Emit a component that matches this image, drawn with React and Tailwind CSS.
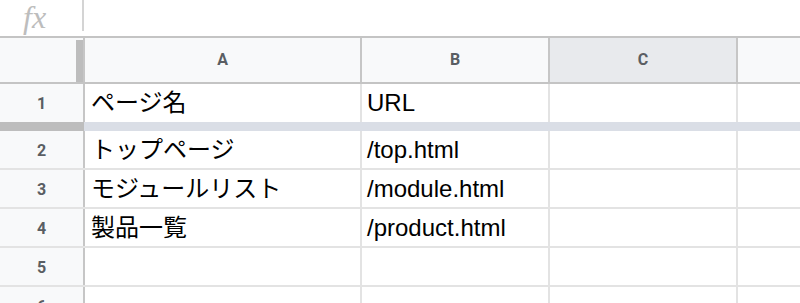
import React from "react";

const rows = [
  { n: "2", a: "トップページ", b: "/top.html" },
  { n: "3", a: "モジュールリスト", b: "/module.html" },
  { n: "4", a: "製品一覧", b: "/product.html" },
  { n: "5", a: "", b: "" },
  { n: "6", a: "", b: "" },
];

const cellText =
  "text-[24px] text-black leading-none [font-family:'Liberation_Sans','Noto_Sans_CJK_JP',sans-serif]";
const hdrText =
  "text-[16px] font-bold text-[#5a5e63] [font-family:Roboto,'Liberation_Sans',sans-serif]";

function BodyRow({ n, a, b, h = "h-[39px]" }) {
  return (
    <div className={`flex ${h} shrink-0 border-b-2 border-[#e3e3e3]`}>
      <div className={`w-[85px] shrink-0 bg-[#f8f9fa] border-r-2 border-[#c6c6c6] flex items-center justify-center pt-[2px] ${hdrText}`}>
        {n}
      </div>
      <div className={`w-[277px] shrink-0 border-r-2 border-[#e3e3e3] flex items-center pl-[6px] ${cellText}`}>
        {a}
      </div>
      <div className={`w-[188px] shrink-0 border-r-2 border-[#e3e3e3] flex items-center pl-[5px] ${cellText}`}>
        {b}
      </div>
      <div className="w-[188px] shrink-0 border-r-2 border-[#e3e3e3]" />
      <div className="flex-1" />
    </div>
  );
}

export default function App() {
  return (
    <div className="w-[800px] h-[303px] overflow-hidden bg-white flex flex-col">
      {/* formula bar */}
      <div className="h-[38px] shrink-0 flex items-start border-b-2 border-[#c4c4c4]">
        <div className="w-[82px] h-[36px] flex items-center pl-[23px]">
          <span className="italic text-[32px] text-[#bdbdbd] leading-[36px] -mt-[3px] [font-family:'Liberation_Serif',serif]">
            fx
          </span>
        </div>
        <div className="w-[2px] h-[31px] bg-[#d4d4d4]" />
      </div>
      {/* column header */}
      <div className="h-[46px] shrink-0 flex border-b-2 border-[#c4c4c4] bg-[#f8f9fa]">
        <div className="w-[85px] shrink-0 flex pt-[2px] border-r-2 border-[#c6c6c6]">
          <div className="w-[76px]" />
          <div className="w-[7px] bg-[#bdbdbd]" />
        </div>
        <div className={`w-[277px] shrink-0 flex items-center justify-center border-r-2 border-[#c6c6c6] ${hdrText}`}>A</div>
        <div className={`w-[188px] shrink-0 flex items-center justify-center border-r-2 border-[#c6c6c6] ${hdrText}`}>B</div>
        <div className={`w-[188px] shrink-0 flex items-center justify-center border-r-2 border-[#c6c6c6] bg-[#e8eaed] ${hdrText}`}>C</div>
        <div className="flex-1" />
      </div>
      {/* row 1 */}
      <div className="flex h-[38px] shrink-0">
        <div className={`w-[85px] shrink-0 bg-[#f8f9fa] border-r-2 border-[#c6c6c6] flex items-center justify-center pt-[2px] ${hdrText}`}>1</div>
        <div className={`w-[277px] shrink-0 border-r-2 border-[#e3e3e3] flex items-center pl-[6px] ${cellText}`}>ページ名</div>
        <div className={`w-[188px] shrink-0 border-r-2 border-[#e3e3e3] flex items-center pl-[5px] ${cellText}`}>URL</div>
        <div className="w-[188px] shrink-0 border-r-2 border-[#e3e3e3]" />
        <div className="flex-1" />
      </div>
      {/* frozen divider */}
      <div className="flex h-[9px] shrink-0">
        <div className="w-[84px] shrink-0 bg-[#bdbdbd]" />
        <div className="flex-1 bg-[#dadee6]" />
      </div>
      {rows.map((r) => (
        <BodyRow key={r.n} {...r} />
      ))}
    </div>
  );
}
